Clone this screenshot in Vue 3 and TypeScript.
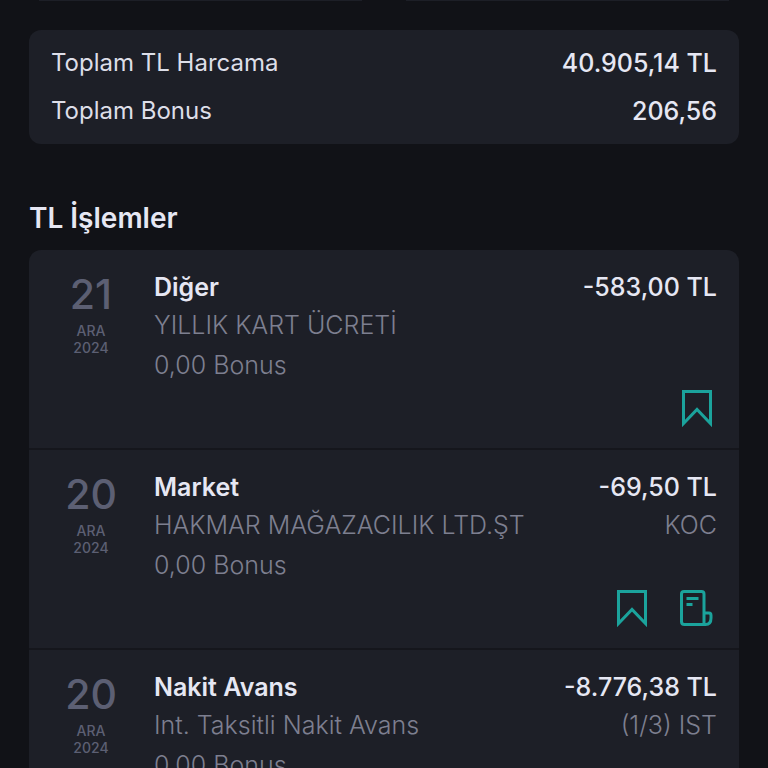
<script setup lang="ts">
interface Transaction {
  id: number
  day: string
  month: string
  year: string
  title: string
  description: string
  bonus: string
  amount: string
  note: string
  receipt: boolean
}

const totals = [
  { label: 'Toplam TL Harcama', value: '40.905,14 TL' },
  { label: 'Toplam Bonus', value: '206,56' },
]

const transactions: Transaction[] = [
  { id: 1, day: '21', month: 'ARA', year: '2024', title: 'Diğer', description: 'YILLIK KART ÜCRETİ', bonus: '0,00 Bonus', amount: '-583,00 TL', note: '', receipt: false },
  { id: 2, day: '20', month: 'ARA', year: '2024', title: 'Market', description: 'HAKMAR MAĞAZACILIK LTD.ŞT', bonus: '0,00 Bonus', amount: '-69,50 TL', note: 'KOC', receipt: true },
  { id: 3, day: '20', month: 'ARA', year: '2024', title: 'Nakit Avans', description: 'Int. Taksitli Nakit Avans', bonus: '0,00 Bonus', amount: '-8.776,38 TL', note: '(1/3) IST', receipt: false },
]
</script>

<template>
  <main class="page">
    <div class="upper-cards">
      <div class="card-edge"></div>
      <div class="card-edge"></div>
    </div>

    <dl class="totals">
      <div v-for="total in totals" :key="total.label" class="total">
        <dt>{{ total.label }}</dt>
        <dd>{{ total.value }}</dd>
      </div>
    </dl>

    <h2 class="heading">TL İşlemler</h2>

    <ul class="list">
      <li v-for="item in transactions" :key="item.id" class="row">
        <div class="date">
          <span class="day">{{ item.day }}</span>
          <span class="month">{{ item.month }}</span>
          <span class="month">{{ item.year }}</span>
        </div>
        <div class="body">
          <div class="line strong">
            <span class="title">{{ item.title }}</span>
            <span>{{ item.amount }}</span>
          </div>
          <div class="line muted">
            <span>{{ item.description }}</span>
            <span>{{ item.note }}</span>
          </div>
          <div class="line muted bonus">{{ item.bonus }}</div>
          <div class="actions">
            <button type="button" class="action" aria-label="Kaydet">
              <svg width="32" height="38" viewBox="0 0 32 38" fill="none" stroke="currentColor" stroke-width="3">
                <path d="M2.5 2.5H29.5V34.5L16 20.5L2.5 34.5Z" />
              </svg>
            </button>
            <button v-if="item.receipt" type="button" class="action" aria-label="Fiş">
              <svg width="34" height="38" viewBox="0 0 34 38" fill="none" stroke="currentColor" stroke-width="3" stroke-linejoin="round">
                <path d="M25 35V5Q25 2.5 22.5 2.5H5Q2.5 2.5 2.5 5V32.5Q2.5 35.5 5.5 35.5H26.5Q32 35.5 32 29V26.5Q32 24 30 24H25" />
                <path d="M7.5 9.5H19.5M7.5 15.5H13.5" />
              </svg>
            </button>
          </div>
        </div>
      </li>
    </ul>
  </main>
</template>

<style>
html {
  background: #111217;
  scrollbar-width: none;
}
</style>

<style scoped>
.page {
  box-sizing: border-box;
  padding: 0 29px;
  background: #111217;
  color: #e6e7f3;
  font-family: Inter, "Liberation Sans", sans-serif;
  font-size: 25px;
  line-height: 32px;
}

.upper-cards {
  display: grid;
  grid-template-columns: 1fr 1fr;
  gap: 44px;
  padding: 0 10px;
}

.card-edge {
  height: 1px;
  background: #1d1f27;
}

.totals {
  display: flex;
  flex-direction: column;
  gap: 16px;
  margin: 29px 0 0;
  padding: 17px 22px;
  border-radius: 12px;
  background: #1d1f27;
}

.total,
.line {
  display: flex;
  justify-content: space-between;
  gap: 16px;
}

.total dt {
  color: #dddee8;
  font-size: 24px;
}

.total dd {
  margin: 0;
  font-weight: 500;
}

.heading {
  margin: 56px 0 14px;
  font-size: 28px;
  line-height: 36px;
  font-weight: 600;
}

.list {
  margin: 0;
  padding: 0;
  list-style: none;
  border-radius: 12px 12px 0 0;
  background: #1d1f27;
}

.row {
  display: flex;
  padding: 21px 22px 20px;
  border-bottom: 2px solid #15161c;
}

.date {
  display: flex;
  flex-direction: column;
  align-items: center;
  flex: none;
  width: 80px;
  margin-right: 23px;
  color: #5c5f73;
}

.day {
  margin: 3px 0 8px;
  font-size: 41px;
  line-height: 40px;
  font-weight: 500;
}

.month {
  font-size: 14px;
  line-height: 17px;
  font-weight: 500;
}

.body {
  flex: 1;
  min-width: 0;
}

.strong {
  margin-bottom: 6px;
  font-weight: 500;
}

.title {
  font-weight: 600;
}

.muted {
  color: #7d7f90;
  font-weight: 300;
}

.bonus {
  margin-top: 8px;
}

.actions {
  display: flex;
  justify-content: flex-end;
  gap: 31px;
  min-height: 38px;
  margin-top: 8px;
  padding: 0 4px 1px 0;
}

.action {
  display: block;
  padding: 0;
  border: 0;
  background: none;
  color: #1ba39c;
}

.action svg {
  display: block;
}
</style>
